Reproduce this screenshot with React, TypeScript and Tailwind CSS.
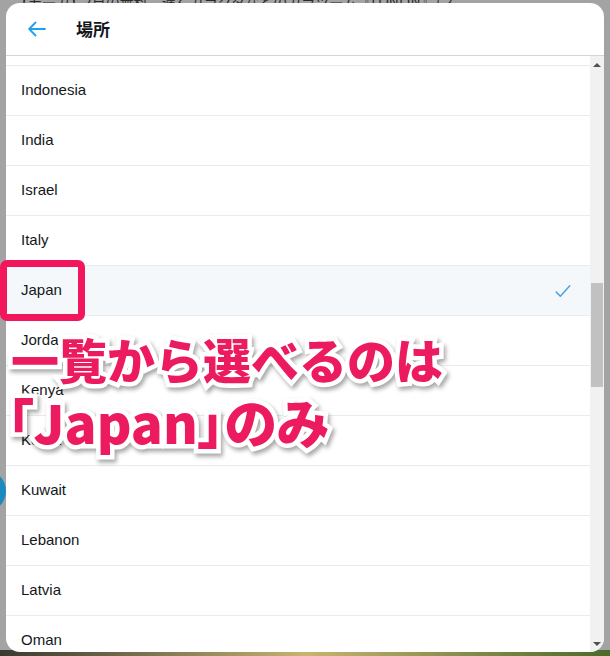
import React from "react"

const countries = ["Indonesia", "India", "Israel", "Italy", "Japan", "Jordan", "Kenya", "Korea", "Kuwait", "Lebanon", "Latvia", "Oman"]

function Check() {
  return (
    <svg width="18" height="18" viewBox="0 0 24 24" fill="none" stroke="#4aa3df" strokeWidth="2" strokeLinecap="round" strokeLinejoin="round">
      <path d="M3 13.5l5.5 5.5L21 5" />
    </svg>
  )
}

export default function App() {
  return (
    <div className="relative w-[610px] h-[656px] overflow-hidden bg-[#a3a3a3] font-['Liberation_Sans',sans-serif]">
      {/* dimmed page behind the modal */}
      <div className="absolute top-[-9px] left-[14px] text-[14px] text-[#2a2a2a] whitespace-nowrap font-['Noto_Sans_CJK_JP',sans-serif]">
        【モ―カ】2日の無料　遅くガラクタなどのカラツ―ム『LONLIN』（ス
      </div>
      <div className="absolute left-[-36px] top-[470px] w-[42px] h-[42px] rounded-full bg-[#1a8ac0]" />
      <div className="absolute left-0 bottom-0 w-full h-[6px] bg-gradient-to-r from-[#3a3a30] via-[#c8b470] to-[#4a6a2a]" />

      {/* modal */}
      <div className="relative z-10 ml-[6px] mt-[3px] w-[598px] h-[649px] rounded-[14px] bg-white overflow-hidden flex flex-col">
        <div className="h-[53px] shrink-0 flex items-center border-b border-[#ccd6dd]">
          <div className="w-[70px] pl-[22px] flex items-center">
            <svg width="18" height="16" viewBox="0 0 18 16" fill="none" stroke="#1da1f2" strokeWidth="1.8" strokeLinecap="round" strokeLinejoin="round">
              <path d="M17 8H1.5M7.5 1.5L1.2 8l6.3 6.5" />
            </svg>
          </div>
          <div className="text-[17px] font-bold text-[#14171a] font-['Noto_Sans_CJK_JP',sans-serif]">場所</div>
        </div>
        <div className="flex flex-1 min-h-0">
          <div className="flex-1 overflow-hidden">
            <div className="h-[10px] border-b border-[#e6ecf0]" />
            {countries.map((c) => (
              <div
                key={c}
                className={`h-[50px] shrink-0 flex items-center justify-between pl-[15px] pr-[18px] border-b border-[#e6ecf0] text-[15px] text-[#14171a] ${
                  c === "Japan" ? "bg-[#f5f8fa]" : ""
                }`}
              >
                <span>{c}</span>
                {c === "Japan" && <Check />}
              </div>
            ))}
          </div>
          <div className="w-[14px] shrink-0 bg-[#f1f1f1] flex flex-col items-center">
            <div className="h-[17px] flex items-center justify-center">
              <div className="w-0 h-0 border-l-[4px] border-r-[4px] border-b-[4px] border-l-transparent border-r-transparent border-b-[#505050]" />
            </div>
            <div className="mt-[210px] w-[12px] h-[104px] bg-[#c1c1c1]" />
            <div className="flex-1" />
            <div className="h-[17px] flex items-center justify-center">
              <div className="w-0 h-0 border-l-[4px] border-r-[4px] border-t-[4px] border-l-transparent border-r-transparent border-t-[#505050]" />
            </div>
          </div>
        </div>
      </div>

      {/* annotation */}
      <div className="absolute z-20 left-0 top-[260px] w-[85px] h-[61px] rounded-[7px] border-[7px] border-[#f2175c]" />
      <div className="absolute z-20 left-[11px] top-[326px] font-['Noto_Sans_CJK_JP',sans-serif] font-black text-[#ec1a5e] whitespace-nowrap [paint-order:stroke_fill] [-webkit-text-stroke:9px_white] drop-shadow-[2px_3px_2px_rgba(0,0,0,0.35)]">
        <div className="text-[48px] leading-[64px]">一覧から選べるのは</div>
        <div className="-ml-[4px] text-[53px] leading-[62px] [font-feature-settings:'palt']">「Japan」のみ</div>
      </div>
    </div>
  )
}
